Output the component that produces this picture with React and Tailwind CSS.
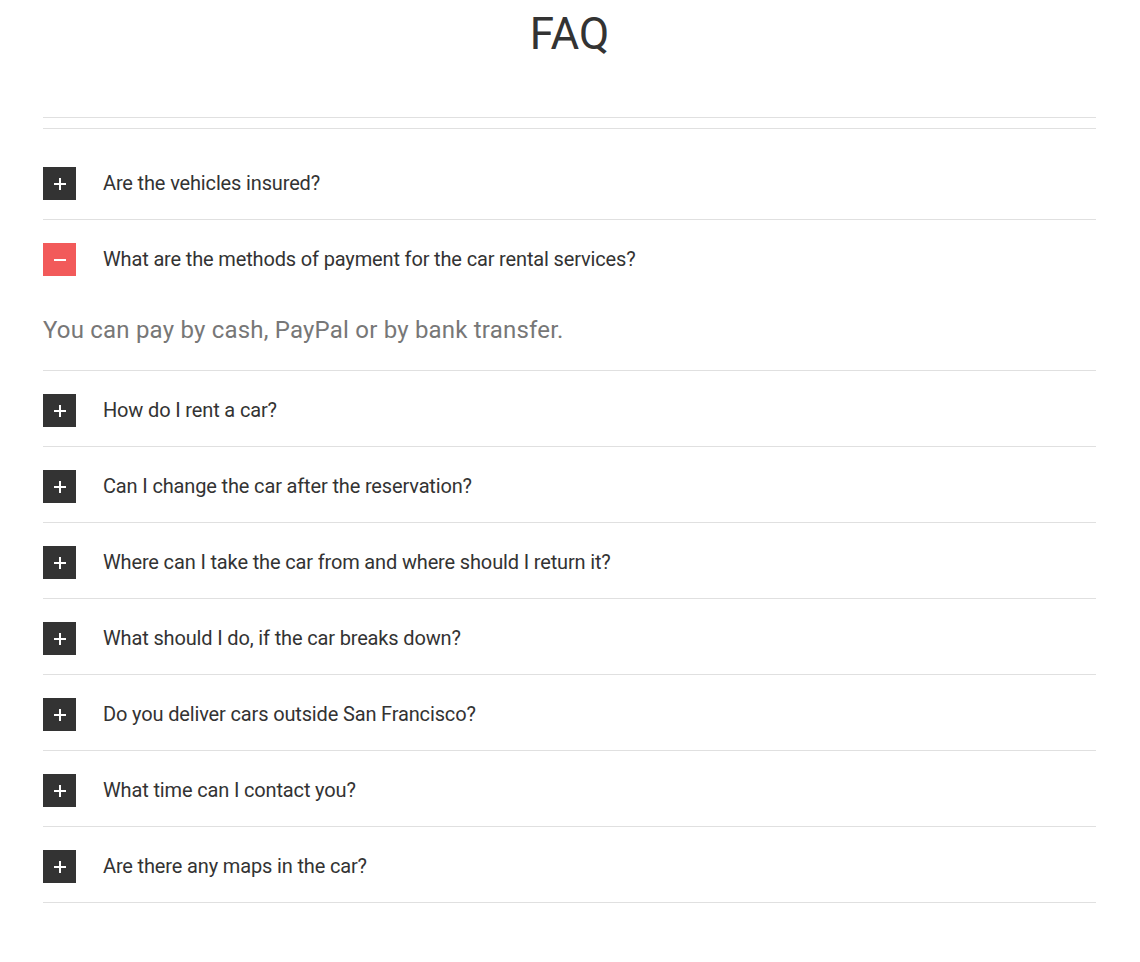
import { useState } from "react";

const faqs = [
  { q: "Are the vehicles insured?", a: "Yes, all of our vehicles are fully insured." },
  {
    q: "What are the methods of payment for the car rental services?",
    a: "You can pay by cash, PayPal or by bank transfer.",
  },
  { q: "How do I rent a car?", a: "Choose a car, pick the dates and book it online." },
  { q: "Can I change the car after the reservation?", a: "Yes, just contact us before the pick-up date." },
  { q: "Where can I take the car from and where should I return it?", a: "At our office or any address you choose." },
  { q: "What should I do, if the car breaks down?", a: "Call our 24/7 road assistance line." },
  { q: "Do you deliver cars outside San Francisco?", a: "Yes, for an additional fee." },
  { q: "What time can I contact you?", a: "Any time, we are open 24/7." },
  { q: "Are there any maps in the car?", a: "Every car has a GPS navigation system." },
];

// --- icono + / − ---
const Toggle = ({ open }) => (
  <span
    className={`relative flex h-[33px] w-[33px] shrink-0 items-center justify-center ${
      open ? "bg-[#f25a5a]" : "bg-[#333333]"
    }`}
  >
    <span className="absolute h-[2px] w-[12px] bg-white" />
    {!open && <span className="absolute h-[12px] w-[2px] bg-white" />}
  </span>
);

export default function App() {
  const [openIndex, setOpenIndex] = useState(1);

  return (
    <div className="min-h-screen bg-white font-['Roboto',sans-serif] text-[#333333]">
      <div className="ml-[43px] mr-[44px] pt-[8px]">
        <h1 className="text-center text-[44px] leading-[53px] font-normal text-[#333333]">
          FAQ
        </h1>

        <div className="mt-[56px] border-t border-[#e0e0e0]" />

        <div className="mt-[10px] border-t border-[#e0e0e0] pt-[15px]">
          {faqs.map((item, i) => {
            const open = openIndex === i;
            return (
              <div key={i} className={i > 0 ? "border-t border-[#e0e0e0]" : ""}>
                <button
                  onClick={() => setOpenIndex(open ? -1 : i)}
                  className="flex w-full cursor-pointer items-center gap-[27px] pt-[23px] pb-[19px] text-left"
                >
                  <Toggle open={open} />
                  <span className="pb-[2px] text-[20px] leading-[24px] tracking-[-0.15px] text-[#333333]">
                    {item.q}
                  </span>
                </button>
                {open && (
                  <p className="pt-[19px] pb-[23px] text-[24px] leading-[33px] tracking-[0.2px] text-[#777777]">
                    {item.a}
                  </p>
                )}
              </div>
            );
          })}
          <div className="border-t border-[#e0e0e0]" />
        </div>
      </div>
    </div>
  );
}
